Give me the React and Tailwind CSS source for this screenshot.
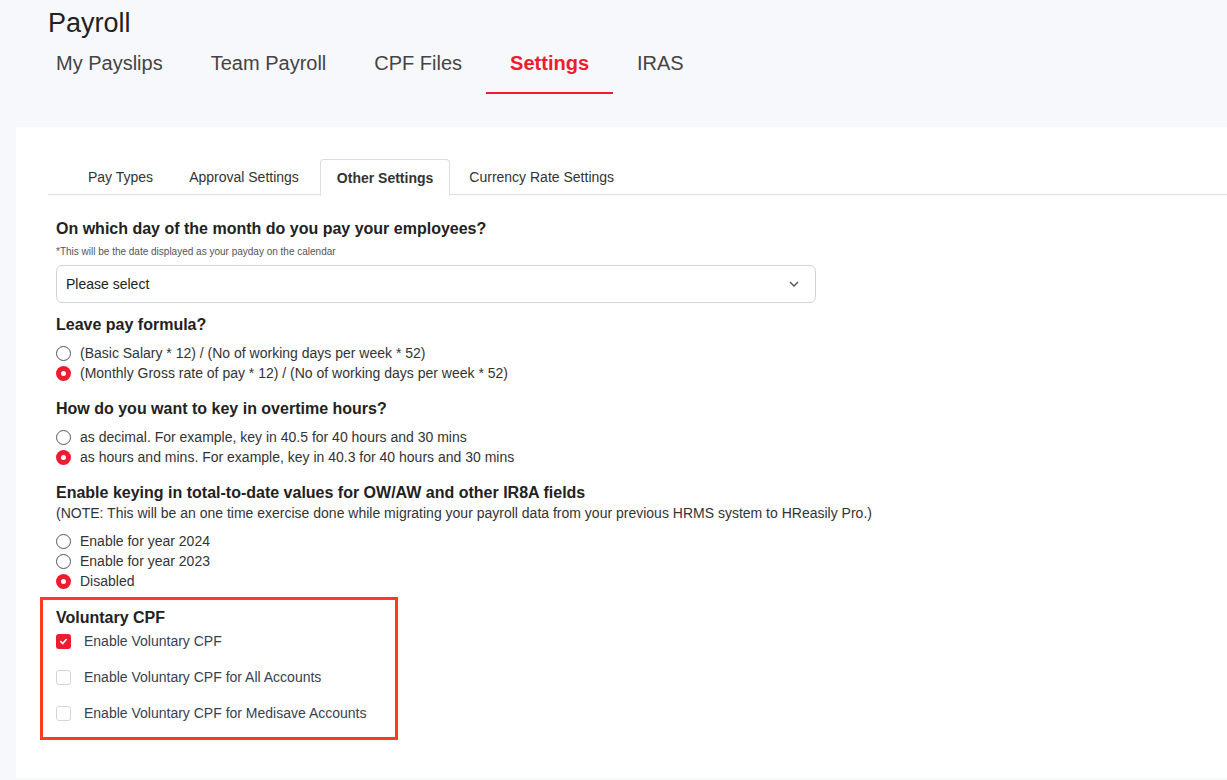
import { useState } from "react";

const font = { fontFamily: '"Liberation Sans", Arial, sans-serif' };

function Radio({ checked, label }) {
  return (
    <label className="flex items-center gap-[9px] h-5 text-[14px] text-[#333]">
      {checked ? (
        <span className="w-[15px] h-[15px] rounded-full bg-[#ee1c2e] flex items-center justify-center">
          <span className="w-[5px] h-[5px] rounded-full bg-white" />
        </span>
      ) : (
        <span className="w-[15px] h-[15px] rounded-full border border-[#555] bg-white" />
      )}
      <span>{label}</span>
    </label>
  );
}

function Check({ checked, label }) {
  return (
    <label className="flex items-center gap-[13px] h-9 text-[14px] text-[#374151]">
      {checked ? (
        <span className="w-[15px] h-[15px] rounded-[3px] bg-[#ee1c2e] flex items-center justify-center">
          <svg width="9" height="9" viewBox="0 0 10 10">
            <path d="M2 5.2 L4.2 7.3 L8 2.8" fill="none" stroke="white" strokeWidth="1.8" strokeLinecap="round" strokeLinejoin="round" />
          </svg>
        </span>
      ) : (
        <span className="w-[15px] h-[15px] rounded-[3px] border border-[#d1d5db] bg-white" />
      )}
      <span>{label}</span>
    </label>
  );
}

export default function App() {
  const [tab] = useState("Settings");
  const tabs = ["My Payslips", "Team Payroll", "CPF Files", "Settings", "IRAS"];

  return (
    <div className="min-h-screen bg-[#f7f8fb]" style={font}>
      {/* Header */}
      <div className="pl-[48px] pt-[7px]">
        <h1 className="text-[27px] leading-8 text-[#222]">Payroll</h1>
        <div className="flex -ml-[16px] mt-[6px]">
          {tabs.map((t) => (
            <div
              key={t}
              className={
                "px-[24px] h-[49px] pt-[3px] text-[20px] " +
                (t === tab ? "text-[#ee1c2e] font-bold border-b-2 border-[#ee1c2e]" : "text-[#444]")
              }
            >
              {t}
            </div>
          ))}
        </div>
      </div>

      {/* Panel */}
      <div className="ml-[16px] mt-[33px] bg-white min-h-[651px] pl-[32px] pt-[32px] pb-[36px]">
        <div className="flex border-b border-[#dedede] h-[36px] text-[14px] text-[#333]">
          <div className="pl-[40px] pr-[18px] flex items-center pt-[1px]">Pay Types</div>
          <div className="px-[18px] flex items-center pt-[1px]">Approval Settings</div>
          <div className="ml-[3px] px-[16px] h-[37px] flex items-center pt-[2px] font-bold bg-white border border-[#dedede] border-b-white rounded-t-[4px]">
            Other Settings
          </div>
          <div className="pl-[19px] flex items-center pt-[1px]">Currency Rate Settings</div>
        </div>

        <div className="pl-[8px]">
          <h2 className="mt-[24px] text-[16px] font-bold text-[#222] leading-5">On which day of the month do you pay your employees?</h2>
          <p className="text-[10px] text-[#555] mt-[7px] leading-3">*This will be the date displayed as your payday on the calendar</p>
          <div className="mt-[7px] w-[760px] h-[38px] rounded-[6px] border border-[#cfd3da] flex items-center justify-between px-[9px] text-[14px] text-[#222]">
            <span>Please select</span>
            <svg width="12" height="12" viewBox="0 0 12 12" className="mr-[6px]">
              <path d="M2 4 L6 8 L10 4" fill="none" stroke="#555" strokeWidth="1.4" />
            </svg>
          </div>

          <h2 className="mt-[12px] text-[16px] font-bold text-[#222] leading-5">Leave pay formula?</h2>
          <div className="mt-[8px]">
            <Radio label="(Basic Salary * 12) / (No of working days per week * 52)" />
            <Radio checked label="(Monthly Gross rate of pay * 12) / (No of working days per week * 52)" />
          </div>

          <h2 className="mt-[16px] text-[16px] font-bold text-[#222] leading-5">How do you want to key in overtime hours?</h2>
          <div className="mt-[8px]">
            <Radio label="as decimal. For example, key in 40.5 for 40 hours and 30 mins" />
            <Radio checked label="as hours and mins. For example, key in 40.3 for 40 hours and 30 mins" />
          </div>

          <h2 className="mt-[16px] text-[16px] font-bold text-[#222] leading-5">Enable keying in total-to-date values for OW/AW and other IR8A fields</h2>
          <p className="text-[14px] text-[#333] leading-5">(NOTE: This will be an one time exercise done while migrating your payroll data from your previous HRMS system to HReasily Pro.)</p>
          <div className="mt-[8px]">
            <Radio label="Enable for year 2024" />
            <Radio label="Enable for year 2023" />
            <Radio checked label="Disabled" />
          </div>
        </div>

        <div className="mt-[6px] -ml-[8px] w-[358px] border-[3px] border-[#ff3b24] pl-[13px] pt-[8px] pb-[6px]">
          <h2 className="text-[16px] font-bold text-[#222] leading-5">Voluntary CPF</h2>
          <div className="-mt-[5px]">
            <Check checked label="Enable Voluntary CPF" />
            <Check label="Enable Voluntary CPF for All Accounts" />
            <Check label="Enable Voluntary CPF for Medisave Accounts" />
          </div>
        </div>
      </div>
    </div>
  );
}
